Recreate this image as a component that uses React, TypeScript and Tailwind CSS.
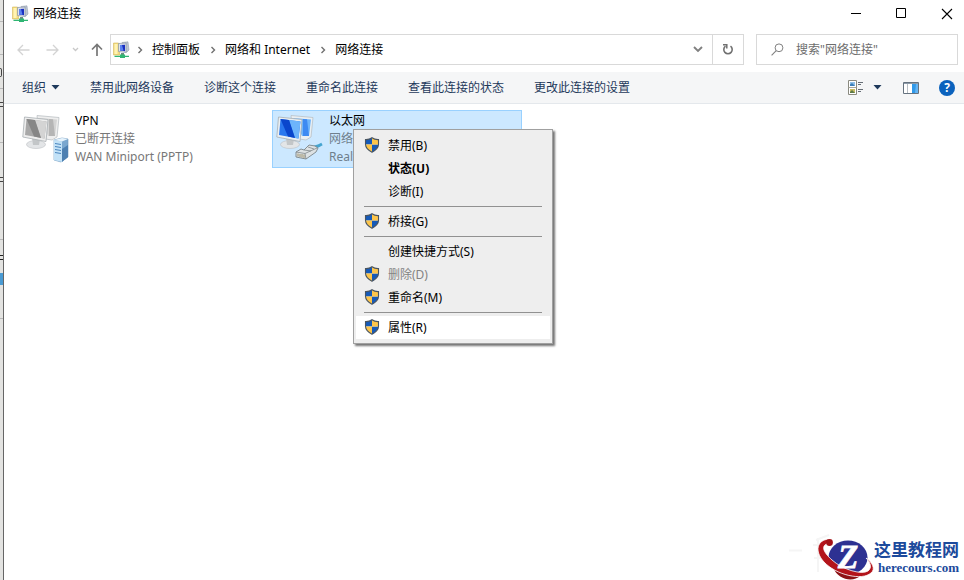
import React from "react";

const UI = "font-['Noto_Sans','Noto_Sans_CJK_SC',sans-serif]";

function NetworkFolderIcon() {
  return (
    <svg width="18" height="18" viewBox="0 0 18 18" aria-hidden="true" className="shrink-0">
      <path d="M.5 2h5l1 1v11h-6z" fill="#f3dc7d" stroke="#d3b75c" strokeWidth=".6" />
      <path d="M1.500 3h3v10h-3z" fill="#fff3b4" />
      <path d="M9 1.500 15 .8l1 8.200-2.500 2.500z" fill="#bcc5d2" stroke="#8b95a5" strokeWidth=".5" />
      <path d="M5.500 2.500 13 2v9.500l-7.500-1z" fill="#dfe3ea" stroke="#8792a3" strokeWidth=".7" />
      <path d="M7 4l5-.3v6.500L7 9.500z" fill="#1a2fc0" />
      <path d="M7 4l2-.1 1.500 5.900L7 9.500z" fill="#5c83ee" />
      <path d="M8 12h3v2H8z" fill="#6c8c80" />
      <path d="M1.500 14.800H7V13.500h5v1.300h4v1.200h-4v1H7v-1H1.500z" fill="#2fb573" />
    </svg>
  );
}

const SHIELD = "M8 .8C6.200 2.100 4 2.700 1.500 2.600v4.700c0 3.600 2.800 6 6.500 7.900 3.700-1.900 6.500-4.300 6.500-7.900V2.600C12 2.700 9.800 2.100 8 .8z";

function Shield() {
  return (
    <svg width="16" height="16" viewBox="0 0 16 16" aria-hidden="true">
      <defs>
        <clipPath id="shield-clip">
          <path d={SHIELD} />
        </clipPath>
      </defs>
      <g clipPath="url(#shield-clip)">
        <path d="M0 0h8v7.500H0zM8 7.500h8V16H8z" fill="#165ab8" />
        <path d="M8 0h8v7.500H8zM0 7.500h8V16H0z" fill="#fdc54a" />
      </g>
      <path d={SHIELD} fill="none" stroke="#4a5560" strokeWidth="1.100" />
    </svg>
  );
}

function Monitors({ active }: { active: boolean }) {
  const dark = active ? "#0a46cc" : "#868686";
  const mid = active ? "#2a78ee" : "#a8a8a8";
  const light = active ? "#6db4fb" : "#d4d4d4";
  const frame = active ? "#e9eff3" : "#eeeeee";
  return (
    <>
      <path d="M15 1.500 37 3.500 35 23 30 26 17 24z" fill={frame} stroke="#b4babe" strokeWidth=".7" />
      <path d="M17 4 35 5.500 33 22 26 22z" fill={light} />
      <path d="M27 5 31 5.300 33 22 27 22z" fill={mid} opacity=".7" />
      <ellipse cx="14" cy="30.500" rx="9.500" ry="4" fill="#e3e5e7" stroke="#bcc0c2" strokeWidth=".6" />
      <path d="M10 24 18 25 17 31 11 31z" fill="#c3c6c8" />
      <path d="M2.500 3 26 5.500 24 27.500 .8 23z" fill={frame} stroke="#a8aeb2" strokeWidth=".8" />
      <path d="M4.500 5 24.500 7.500 22.500 24.500 3 21z" fill={mid} />
      <path d="M13 6 24.500 7.500 22.500 24.500 19 24z" fill={light} />
      <path d="M4.500 5 13 6 19 24 12 22.600z" fill={dark} />
    </>
  );
}

function VpnIcon() {
  return (
    <svg width="50" height="54" viewBox="0 0 50 54" aria-hidden="true" className="shrink-0">
      <Monitors active={false} />
      <path d="M32 26 40 24 46 25 46 43 39 48 32 46z" fill="#7aa7cf" stroke="#6d95bb" strokeWidth=".6" />
      <path d="M32 26 40 27.500 40 48 32 46z" fill="#c3e2f7" />
      <path d="M32 26 40 24 46 25 40 27.500z" fill="#e6f3fc" />
      <path d="M33 29.500l6 1M33 32.500l6 1M33 35.500l6 1M33 38.500l6 1" stroke="#4a86bf" strokeWidth="1" />
      <path d="M40 35 46 31 46 43 40 48z" fill="#4d80b2" />
    </svg>
  );
}

function EthernetIcon() {
  return (
    <svg width="50" height="54" viewBox="0 0 50 54" aria-hidden="true" className="shrink-0">
      <Monitors active />
      <path d="M36 34 42 32 46 30" fill="none" stroke="#45a5d0" strokeWidth="3" />
      <path d="M20 38 25 35 28 36 33 31 39 32 42 34 40 38 30 45 20 43z" fill="#dde2e4" stroke="#7b8489" strokeWidth=".9" />
      <path d="M20 38 29 39.500 41 34M29 39.500 30 45M28 36l7 1M32 33l6 2" fill="none" stroke="#82898c" strokeWidth=".8" />
      <path d="M22 39.500v3M24 40v3M26 40v3.500M28 40.500v3.500" stroke="#958960" strokeWidth=".9" />
    </svg>
  );
}

function Chevron() {
  return (
    <svg width="6" height="8" viewBox="0 0 6 8" aria-hidden="true">
      <path d="M1.500 1 4.500 4 1.500 7" fill="none" stroke="#707070" strokeWidth="1.400" />
    </svg>
  );
}

function Caret() {
  return (
    <svg width="9" height="5" viewBox="0 0 9 5" aria-hidden="true">
      <path d="M.5 0h8l-4 4.500z" fill="#1e395b" />
    </svg>
  );
}

function TitleBar() {
  return (
    <header className="flex h-[27px] items-center pl-2">
      <NetworkFolderIcon />
      <h1 className="ml-[3px] flex-1 text-xs text-black">网络连接</h1>
      <button aria-label="最小化" className="flex h-full w-[45px] items-center justify-center">
        <svg width="11" height="11" viewBox="0 0 11 11"><path d="M0 5.500h10" stroke="#000" /></svg>
      </button>
      <button aria-label="最大化" className="flex h-full w-[45px] items-center justify-center">
        <svg width="11" height="11" viewBox="0 0 11 11"><path d="M.5.5h9v9h-9z" fill="none" stroke="#000" /></svg>
      </button>
      <button aria-label="关闭" className="flex h-full w-10 items-center justify-center pl-[6px]">
        <svg width="12" height="12" viewBox="0 0 12 12"><path d="M1 1l10 10M11 1 1 11" stroke="#000" strokeWidth="1.100" /></svg>
      </button>
    </header>
  );
}

function AddressRow() {
  return (
    <div className="flex h-[45px] items-center pr-[6px]">
      <nav aria-label="导航" className="flex w-[106px] items-center">
        <button aria-label="后退" className="flex w-[38px] justify-center">
          <svg width="13" height="12" viewBox="0 0 13 12"><path d="M12.500 6H1M6 1 1 6l5 5" fill="none" stroke="#d3d3d3" strokeWidth="1.300" /></svg>
        </button>
        <button aria-label="前进" className="flex w-5 justify-center">
          <svg width="13" height="12" viewBox="0 0 13 12"><path d="M.5 6H12M7 1l5 5-5 5" fill="none" stroke="#d3d3d3" strokeWidth="1.300" /></svg>
        </button>
        <button aria-label="最近的位置" className="flex w-[26px] justify-center">
          <svg width="7" height="5" viewBox="0 0 7 5"><path d="M1 1l2.500 2.500L6 1" fill="none" stroke="#c8c8c8" strokeWidth="1.300" /></svg>
        </button>
        <button aria-label="向上" className="flex w-[18px] justify-center">
          <svg width="12" height="13" viewBox="0 0 12 13"><path d="M6 13V1.500M1 6.500l5-5 5 5" fill="none" stroke="#777" strokeWidth="1.700" /></svg>
        </button>
      </nav>
      <div className="flex h-[31px] min-w-0 flex-1 items-center border border-[#d9d9d9]">
        <div className="flex min-w-0 flex-1 items-center pl-[2px] text-xs text-black">
          <NetworkFolderIcon />
          <span className="ml-[6px] flex w-[14px] items-center"><Chevron /></span>
          <a href="#panel" className="ml-px">控制面板</a>
          <span className="flex w-[25px] justify-center"><Chevron /></span>
          <a href="#network">网络和 Internet</a>
          <span className="flex w-[25px] justify-center"><Chevron /></span>
          <a href="#connections">网络连接</a>
        </div>
        <button aria-label="历史记录" className="flex w-7 justify-center">
          <svg width="10" height="7" viewBox="0 0 10 7"><path d="M1 1l4 4 4-4" fill="none" stroke="#808080" strokeWidth="1.900" /></svg>
        </button>
        <button aria-label="刷新" className="flex h-full w-[31px] items-center justify-center border-l border-[#d9d9d9]">
          <svg width="12" height="13" viewBox="0 0 12 13">
            <path d="M8.500 3.200A4.200 4.200 0 1 1 3.500 3.200" fill="none" stroke="#707070" strokeWidth="1.600" />
            <path d="M1 1.700H4.800V5.500" fill="none" stroke="#707070" strokeWidth="1.500" />
          </svg>
        </button>
      </div>
      <label className="ml-3 flex h-[31px] w-[202px] items-center border border-[#d9d9d9] pl-[14px]">
        <svg width="13" height="13" viewBox="0 0 13 13" aria-hidden="true">
          <circle cx="8" cy="4.800" r="3.900" fill="none" stroke="#808080" />
          <path d="M5.200 7.700.6 12.300" stroke="#808080" strokeWidth="1.100" />
        </svg>
        <input aria-label="搜索" placeholder={'搜索"网络连接"'} className="ml-3 min-w-0 flex-1 text-xs text-[#6d6d6d] outline-none placeholder:text-[#6d6d6d]" />
      </label>
    </div>
  );
}

const commands = ["禁用此网络设备", "诊断这个连接", "重命名此连接", "查看此连接的状态", "更改此连接的设置"];

function CommandBar() {
  return (
    <div className="flex h-8 items-center border-b border-[#e4e8ec] bg-[#f5f6f7] pl-[18px] pr-[9px] text-xs text-[#1e395b]">
      <button className="mr-[30px] flex items-center gap-[5px]">组织<Caret /></button>
      <div className="flex flex-1 gap-[30px]">
        {commands.map((c) => (
          <button key={c} className="whitespace-nowrap">{c}</button>
        ))}
      </div>
      <button aria-label="更改视图">
        <svg width="16" height="15" viewBox="0 0 16 15">
          <path d="M.5.5h8v14h-8z" fill="#fff" stroke="#8a8a80" />
          <path d="M.5 7.500h8" stroke="#a5a59b" />
          <path d="M2 2h5v4H2z" fill="#8fc0ea" />
          <path d="M2 4.500 4 3l3 3H2z" fill="#3c7fb8" />
          <path d="M2 9h5v4H2z" fill="#c9bd62" />
          <path d="M2 12l2-2 3 3H2z" fill="#5d7a48" />
          <path d="M10 2.500h5M10 4.500h3M10 9.500h5M10 11.500h3" stroke="#666d75" />
        </svg>
      </button>
      <button aria-label="更多选项" className="ml-[9px]"><Caret /></button>
      <button aria-label="预览窗格" className="ml-[21px]">
        <svg width="16" height="12" viewBox="0 0 16 12">
          <path d="M.5.5h15v11H.5z" fill="#fff" stroke="#65727f" />
          <path d="M1 1.500h14" stroke="#8c9aa8" />
          <path d="M4.500 2v9" stroke="#b8bec4" />
          <path d="M9 2h6v9H9z" fill="#3199e8" />
          <path d="M13 2h2v9h-3z" fill="#65b4f2" />
        </svg>
      </button>
      <button aria-label="帮助" className="ml-5 flex size-4 items-center justify-center rounded-full bg-[#0b62bd] text-xs font-bold text-white">?</button>
    </div>
  );
}

type MenuEntry = { label: string; shield?: boolean; bold?: boolean; disabled?: boolean; selected?: boolean };

const groups: MenuEntry[][] = [
  [{ label: "禁用(B)", shield: true }, { label: "状态(U)", bold: true }, { label: "诊断(I)" }],
  [{ label: "桥接(G)", shield: true }],
  [{ label: "创建快捷方式(S)" }, { label: "删除(D)", shield: true, disabled: true }, { label: "重命名(M)", shield: true }],
  [{ label: "属性(R)", shield: true, selected: true }],
];

function ContextMenu() {
  return (
    <div role="menu" className="absolute left-20 top-[18px] z-10 w-[200px] border border-[#a0a0a0] bg-[#eeeeee] px-[2px] py-1 shadow-[2px_2px_2px_rgba(0,0,0,0.55)]">
      {groups.map((group, i) => (
        <div key={i}>
          {i > 0 && <hr className="mx-2 my-[3px] border-t border-[#919191]" />}
          {group.map((e) => (
            <button
              key={e.label}
              role="menuitem"
              disabled={e.disabled}
              className={`flex h-[23px] w-full items-center text-xs ${e.selected ? "bg-white" : ""} ${e.bold ? "font-bold" : ""} ${e.disabled ? "text-[#838383]" : "text-black"}`}
            >
              <span className="flex w-8 items-center pb-[2px] pl-2">{e.shield && <Shield />}</span>
              {e.label}
            </button>
          ))}
        </div>
      ))}
    </div>
  );
}

function Connections() {
  return (
    <main className="flex flex-1 items-start pl-[17px] pt-[6px]">
      <article className="flex h-[58px] w-[251px] items-start pl-px pt-px">
        <div className="pt-[3px]"><VpnIcon /></div>
        <div className="ml-[3px] whitespace-nowrap pt-px text-xs leading-[18px] text-[#777]">
          <h2 className="text-black">VPN</h2>
          <p>已断开连接</p>
          <p>WAN Miniport (PPTP)</p>
        </div>
      </article>
      <article className="relative flex h-[58px] w-[250px] items-start border border-[#99d1ff] bg-[#cce8ff]">
        <div className="pl-[3px] pt-[3px]"><EthernetIcon /></div>
        <div className="ml-[3px] whitespace-nowrap pt-px text-xs leading-[18px] text-[#6f7f8c]">
          <h2 className="text-black">以太网</h2>
          <p>网络</p>
          <p>Realtek</p>
        </div>
        <ContextMenu />
      </article>
    </main>
  );
}

function SiteMark() {
  return (
    <footer className="flex items-end justify-end pr-[5px]">
      <svg width="88" height="50" viewBox="0 0 88 50" aria-hidden="true">
        <path d="M3 20.500h13M30 10l13-5M27 15h20M32 8v34M28 28h16" stroke="#f5f5f5" strokeWidth="2" />
        <ellipse cx="62" cy="27.500" rx="19.500" ry="17" fill="#2d3192" />
        <path d="M47 37C55 44 65 47 74 46 68 52 52 51 47 37z" fill="#8c1216" />
        <path d="M43 9C31 10 28 21 38 32 50 45 76 51 85 43c5-4 1-11-5-15 5 5 6 10 2 13C76 45 57 40 46 30 36 21 35 15 43 13z" fill="#b3141b" stroke="#fff" strokeWidth=".8" />
        <circle cx="43.500" cy="12.500" r="3.400" fill="#a31217" />
        <text x="62" y="38" textAnchor="middle" fontFamily="Liberation Serif, serif" fontStyle="italic" fontWeight="bold" fontSize="33" fill="#fff" stroke="#fff" strokeWidth=".8">Z</text>
      </svg>
      <div className="whitespace-nowrap pb-1 text-right font-bold text-[#1c4a9c]">
        <p className="text-[17px] leading-5">这里教程网</p>
        <p className="font-['Liberation_Serif',serif] text-[13px] leading-4">herecours.com</p>
      </div>
    </footer>
  );
}

function WindowBehind() {
  return (
    <aside aria-hidden="true" className="flex w-1 shrink-0 flex-col border-r border-[#666] bg-[#e3e3e1]">
      <div className="h-[22px] shrink-0 border-b border-[#b8b8b8]" />
      <div className="h-[33px] shrink-0 border-b border-[#b8b8b8]" />
      <div className="h-[34px] shrink-0 border-b border-[#b8b8b8] pt-[13px]">
        <div className="h-[9px] w-[2px] rounded-r-full border-y border-r border-[#444]" />
      </div>
      <div className="h-[54px] shrink-0 border-b border-[#b8b8b8] pt-[13px]">
        <div className="h-[5px] border-y border-[#444]" />
      </div>
      <div className="h-[97px] shrink-0 border-b border-[#b8b8b8] pt-[34px]">
        <div className="h-[5px] border-y border-[#444]" />
      </div>
      <div className="h-[79px] shrink-0 border-b border-[#b8b8b8] pt-[15px]">
        <div className="h-[5px] border-y border-[#222]" />
        <div className="mt-[13px] h-3 bg-[#4a9bd4]" />
      </div>
    </aside>
  );
}

export default function App() {
  return (
    <div className={`flex h-screen bg-white ${UI}`}>
      <WindowBehind />
      <div className="flex min-w-0 flex-1 flex-col">
        <TitleBar />
        <AddressRow />
        <CommandBar />
        <Connections />
        <SiteMark />
      </div>
    </div>
  );
}
